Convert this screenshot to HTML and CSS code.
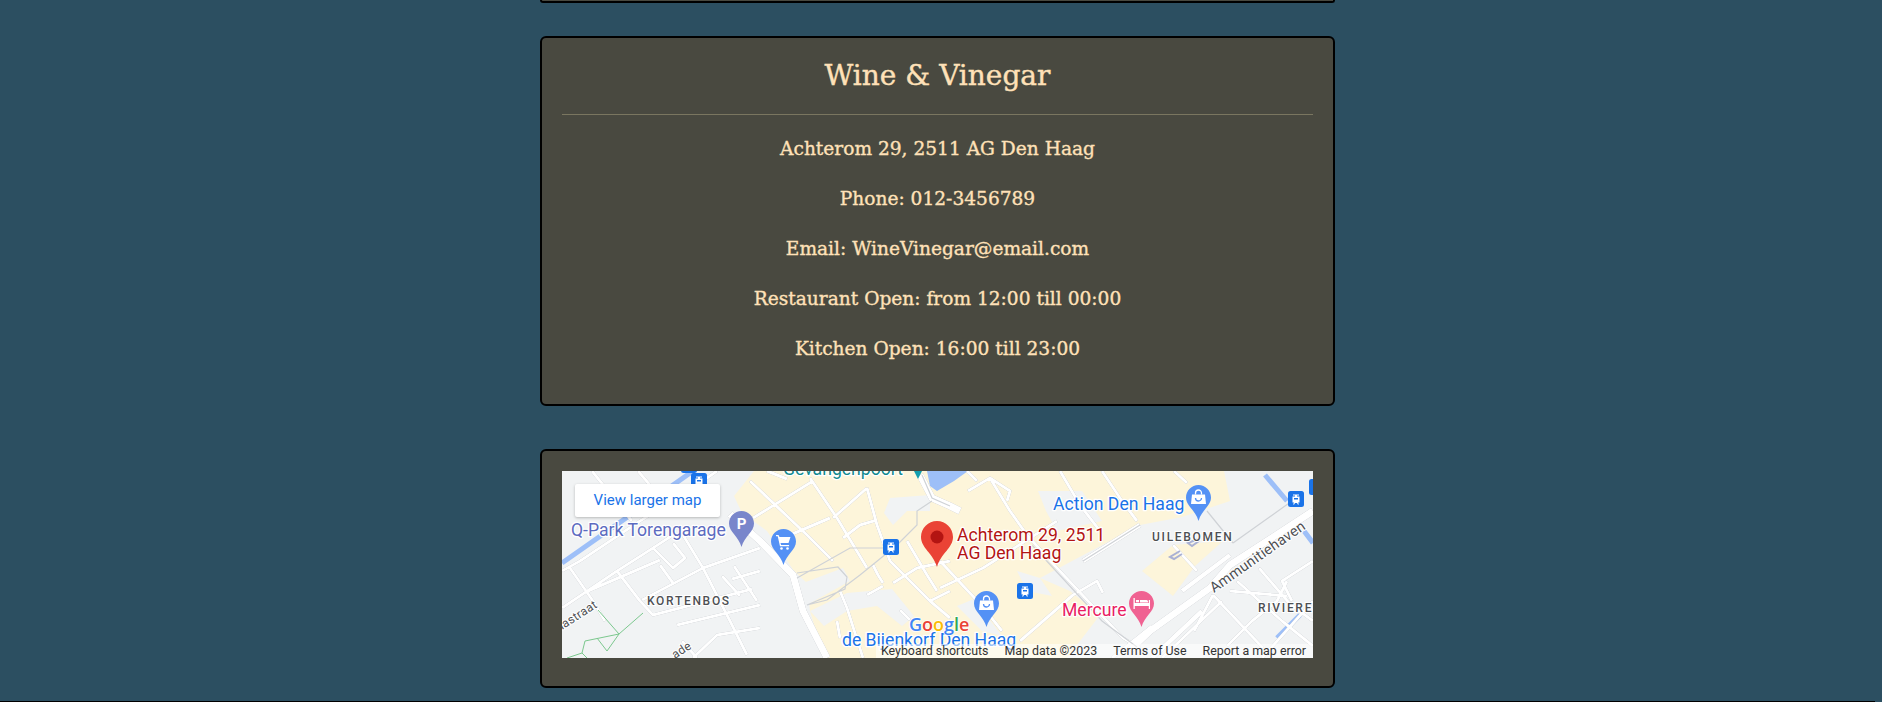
FILE: index.html
```html
<!DOCTYPE html>
<html>
<head>
  <meta charset="UTF-8">
  <meta name="viewport" content="width=device-width, initial-scale=1.0">
  <title>Wine &amp; Vinegar</title>
  <link rel="stylesheet" href="styles.css">
</head>
<body>
  <div class="card card-cut"></div>

  <section class="card card-info">
    <h2>Wine &amp; Vinegar</h2>
    <hr>
    <div class="info">
      <p>Achterom 29, 2511 AG Den Haag</p>
      <p>Phone: 012-3456789</p>
      <p>Email: WineVinegar@email.com</p>
      <p>Restaurant Open: from 12:00 till 00:00</p>
      <p>Kitchen Open: 16:00 till 23:00</p>
    </div>
  </section>

  <section class="card card-map">
    <div class="map">
      <svg class="map-art" width="751" height="187" viewBox="0 0 751 187">
        <defs>
          <path id="pin" d="M12.5 0C5.6 0 0 5.6 0 12.5 0 21 9.5 25 12.5 36 15.5 25 25 21 25 12.5 25 5.6 19.4 0 12.5 0Z"/>
          <g id="tram">
            <rect width="16" height="16" rx="2.5" fill="#1a73e8"/>
            <path d="M5 3.5h6v1H9v1h2.5v6H10l1 2H9.8l-.8-1.5H7L6.2 13.500H5l1-2H4.500v-6H7v-1H5Z M6 7v1.500h4V7Z" fill="#fff" fill-rule="evenodd"/>
          </g>
          <g id="bag">
            <path d="M6 9.500h13l1 9.500H5Z" fill="#fff"/>
            <path d="M9.500 9.500V8a3 3 0 0 1 6 0v1.500" fill="none" stroke="#fff" stroke-width="1.300"/>
            <path d="M9.500 13a3 3 0 0 0 6 0" fill="none" stroke="#5491f5" stroke-width="1.300"/>
          </g>
        </defs>

        <polygon class="yellow" points="192,0 662,0 668,30 620,46 578,54 478,107 508,120 538,144 505,187 262,187 248,140 245,112 232,100 205,60 180,42 172,25"/>
        <polygon class="yellow" points="580,100 611,74 661,70 633,95 611,125"/>
        <polygon class="grey" points="328,27 368,24 368,40 345,40 331,54 322,42"/>
        <polygon class="grey" points="241,112 281,97 288,110 245,134"/>
        <polygon class="grey" points="476,20 520,20 540,50 495,60 484,40"/>
        <polygon class="grey" points="248,140 285,122 330,118 352,145 340,155 315,135 285,140 262,155"/>
        <polygon class="grey" points="455,100 478,107 490,125 465,120"/>
        <polygon class="grey" points="395,135 412,128 440,165 420,160"/>
        <polygon class="water" points="365,0 406,0 392,10 375,20 368,15"/>

        <path class="canal" d="M0 92 131 0M703 4 725 30M738 144 715 167M742 60 751 72"/>

        <g class="roads">
          <path class="road" d="M0 100 18 90 78 50 131 17 155 0M8 97 31 130 43 150M0 137 55 100 91 77 111 64M26 120 98 89M55 100 78 130 91 144 145 130M80 129 141 97 198 77M115 154 198 134M131 187 155 164 198 157M121 64 141 97 168 150 185 184M91 77 111 97 123 87 111 72M98 94 111 112M160 105 178 125M172 95 195 130M170 108 198 100M30 0 70 50M76 0 110 40M145 130 190 118M120 170 135 187"/>
          <path class="road" d="M188 10 245 64 271 90M191 47 251 10M221 67 268 47M248 7 275 47 305 97M271 47 305 17M281 67 298 54 315 49M305 17 315 54 328 90 368 130 388 147M345 70 365 104 375 120M331 112 355 97 388 90M311 94 316 104 321 112M368 130 388 120M278 120 285 137 301 187M275 150 278 167M338 139 348 149M305 124 321 115M205 0 225 8"/>
          <path class="road" d="M428 7 448 40 465 64 495 97 561 167 578 177M406 20 428 7 448 20 445 30M378 117 421 97 495 50M498 0 518 34 538 60M458 170 511 124 535 110 541 122M378 90 420 135 440 160M405 0 415 10M540 0 560 30 575 50M611 74 635 100M651 124 701 177M632 160 651 124M668 120 725 125M697 97 728 133 751 150M751 90 720 110 730 130M600 187 660 130M700 187 751 130M675 110 720 150 751 175M725 110 715 130 690 150 665 175M550 187 590 155M612 0 625 12"/>
          <path class="road road-wide" d="M168 43 198 70 231 104 241 140 265 187"/>
          <path class="road road-wide" d="M358 4 370 27 388 35 398 40"/>
          <path class="road road-wide" d="M568 179 588 160 648 117 668 94 751 40"/>
          <path class="road road-mid" d="M521 90 578 54M620 120 668 84M590 187 640 140"/>
        </g>

        <path class="rail" d="M235 107 288 77 321 77M245 134 265 129 298 104 335 74 355 54 355 40 370 30M235 102 276 96 285 106 283 118 245 134M645 40 671 72M671 72 730 30M521 90 578 54M470 74 540 150 575 176M360 4 370 27 388 35"/>
        <path class="park" d="M36 139 57 163 81 142M57 163 23 170 20 182 5 187M57 163 45 180 35 167M20 182 25 187"/>
        <path class="arrow" d="M636 68 626 72 630 75 637 70M618 80 608 86 612 88 620 83"/>
        <path class="teal-pin" d="M352 0h8l-4 8Z"/>

        <use href="#tram" x="119" y="-14"/>
        <use href="#tram" x="129" y="2"/>
        <use href="#tram" x="321" y="68"/>
        <use href="#tram" x="455" y="112"/>
        <use href="#tram" x="726" y="20"/>
        <use href="#tram" x="747" y="8"/>

        <text class="label label-teal" x="221" y="4">Gevangenpoort</text>
        <text class="label label-blue" x="491" y="39">Action Den Haag</text>
        <text class="label label-blue" x="280" y="175">de Bijenkorf Den Haag</text>
        <text class="label label-indigo" x="9" y="65">Q-Park Torengarage</text>
        <text class="label label-red" x="395" y="70">Achterom 29, 2511</text>
        <text class="label label-red" x="395" y="88">AG Den Haag</text>
        <text class="label label-pink" x="500" y="145">Mercure</text>

        <text class="area" x="85" y="134">KORTENBOS</text>
        <text class="area" x="590" y="70">UILEBOMEN</text>
        <text class="area" x="696" y="141">RIVIERENB</text>
        <text class="street" transform="translate(652 122) rotate(-35)">Ammunitiehaven</text>
        <text class="street street-sm" transform="translate(-3 161) rotate(-33)">nastraat</text>
        <text class="street street-sm" transform="translate(113 188) rotate(-33)">ade</text>

        <g transform="translate(167 40)">
          <use href="#pin" fill="#7986cb"/>
          <text class="pin-p" x="12.500" y="18">P</text>
        </g>
        <g transform="translate(209 58)">
          <use href="#pin" fill="#5491f5"/>
          <path d="M5 6h2.500l1 2h11l-2 6H9.500l.6 2h8v1.300H9L6.700 7.300H5Z" fill="#fff"/>
          <circle cx="10.500" cy="19.500" r="1.300" fill="#fff"/>
          <circle cx="16.500" cy="19.500" r="1.300" fill="#fff"/>
        </g>
        <g transform="translate(624 14)">
          <use href="#pin" fill="#5491f5"/>
          <use href="#bag"/>
        </g>
        <g transform="translate(412 120)">
          <use href="#pin" fill="#5491f5"/>
          <use href="#bag"/>
        </g>
        <g transform="translate(567 120)">
          <use href="#pin" fill="#f06292"/>
          <path d="M4.500 7h1.300v5h14V9H21v9h-1.200v-3H5.800v3H4.500Z M7 9h3v2.300H7Z M11 9h6.500a1.500 1.500 0 0 1 1.500 1.500v1H11Z" fill="#fff"/>
        </g>
        <g transform="translate(359 50)">
          <path d="M16 0C7.200 0 0 7.200 0 16 0 27 12 32 16 46 20 32 32 27 32 16 32 7.200 24.800 0 16 0Z" fill="#ea4335"/>
          <circle cx="16" cy="16" r="6.500" fill="#b31412"/>
        </g>

        <text class="logo" x="347" y="160"><tspan fill="#4285f4">G</tspan><tspan fill="#ea4335">o</tspan><tspan fill="#fbbc04">o</tspan><tspan fill="#4285f4">g</tspan><tspan fill="#34a853">l</tspan><tspan fill="#ea4335">e</tspan></text>
      </svg>

      <a class="map-btn">View larger map</a>

      <div class="map-links">
        <span>Keyboard shortcuts</span>
        <span>Map data ©2023</span>
        <span>Terms of Use</span>
        <span>Report a map error</span>
      </div>
    </div>
  </section>

  <footer class="foot"></footer>
</body>
</html>
```

FILE: styles.css
```css
html, body {
  margin: 0;
  padding: 0;
  overflow: hidden;
}

body {
  box-sizing: border-box;
  font-family: "DejaVu Serif", "Liberation Serif", serif;
  background-color: #2c4f61;
  color: #ffe1b8;
  height: 702px;
  padding-right: 7px;
}

.card {
  box-sizing: border-box;
  width: 795px;
  margin: 0 auto;
  padding: 20px;
  background-color: #494940;
  border: 2px solid #000;
  border-radius: 6px;
}

.card-cut {
  height: 3px;
  padding: 0;
  border-top: none;
  border-radius: 0 0 6px 6px;
  margin-bottom: 33px;
}

.card-info {
  height: 370px;
  margin-bottom: 43px;
}

h2 {
  margin: 0 0 20px;
  font-size: 28px;
  font-weight: 400;
  line-height: 36px;
  text-align: center;
  -webkit-text-stroke: 0.4px #ffe1b8;
}

hr {
  margin: 0;
  border: none;
  border-top: 1px solid #7a7660;
}

.info {
  display: flex;
  flex-direction: column;
  gap: 26px;
  padding-top: 22px;
}

.info p {
  margin: 0;
  font-size: 18.600px;
  line-height: 24px;
  text-align: center;
  -webkit-text-stroke: 0.35px #ffe1b8;
}

.card-map {
  height: 239px;
}

.map {
  position: relative;
  width: 751px;
  height: 187px;
  overflow: hidden;
  background-color: #f1f3f4;
  font-family: Roboto, sans-serif;
}

.map-art {
  display: block;
}

.yellow { fill: #fdf5da; }
.grey { fill: #f1f3f4; }
.water { fill: #9dbff8; }

.canal {
  fill: none;
  stroke: #9dbff8;
  stroke-width: 5;
}

.roads {
  filter: drop-shadow(0 0 0.7px #a9adb4);
}

.road {
  fill: none;
  stroke: #fff;
  stroke-width: 3;
  stroke-linejoin: round;
}

.road-mid { stroke-width: 4.500; }
.road-wide { stroke-width: 7; }

.rail {
  fill: none;
  stroke: #cfd2d6;
  stroke-width: 1.200;
}

.park {
  fill: none;
  stroke: #7cc88e;
  stroke-width: 1;
}

.arrow {
  fill: none;
  stroke: #aab1d3;
  stroke-width: 2;
}

.teal-pin { fill: #129eaf; }

.label {
  font-size: 17.600px;
  paint-order: stroke;
  stroke: #fff;
  stroke-width: 2.500px;
  stroke-linejoin: round;
}

.label-teal { fill: #0f8a8f; }
.label-blue { fill: #1a73e8; }
.label-indigo { fill: #5c6bc0; }
.label-red { fill: #b31412; }
.label-pink { fill: #e91e63; }

.area {
  font-size: 12px;
  font-weight: 500;
  letter-spacing: 1.700px;
  fill: #4d4f53;
  paint-order: stroke;
  stroke: #fff;
  stroke-width: 2px;
}

.street {
  font-size: 14.500px;
  letter-spacing: 0.300px;
  fill: #4d4f53;
  paint-order: stroke;
  stroke: #fff;
  stroke-width: 2px;
}

.street-sm {
  font-size: 12px;
}

.pin-p {
  font-size: 15px;
  font-weight: 700;
  fill: #fff;
  text-anchor: middle;
}

.logo {
  font-family: "Open Sans", sans-serif;
  font-size: 18px;
  font-weight: 600;
  paint-order: stroke;
  stroke: #fff;
  stroke-width: 1.500px;
}

.map-btn {
  position: absolute;
  top: 13px;
  left: 13px;
  width: 145px;
  height: 33px;
  background-color: #fff;
  border-radius: 2px;
  box-shadow: 0 1px 3px rgba(0, 0, 0, 0.25);
  color: #1a73e8;
  font-size: 15px;
  line-height: 33px;
  text-align: center;
}

.map-links {
  position: absolute;
  right: 0;
  bottom: 0;
  left: 314px;
  display: flex;
  gap: 16px;
  height: 14px;
  padding-right: 7px;
  justify-content: flex-end;
  background-color: rgba(255, 255, 255, 0.55);
  color: #333;
  font-size: 12.400px;
  line-height: 14px;
}

.foot {
  margin-top: 13px;
  border-top: 1px solid #000;
}
```
